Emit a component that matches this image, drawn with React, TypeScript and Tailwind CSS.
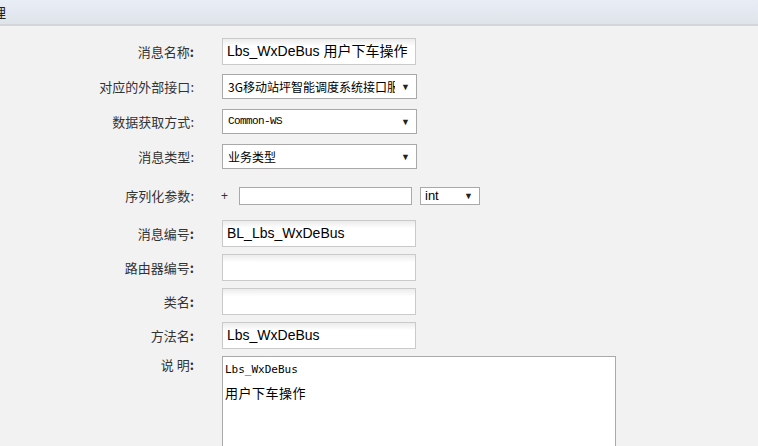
import React from "react";

const cjk = "font-['Microsoft_YaHei','Noto_Sans_CJK_SC',sans-serif]";

const Label = ({ text, strong }: { text: string; strong?: boolean }) => (
  <div
    className={`w-[194px] shrink-0 text-right text-[13px] leading-[18px] text-[#333] ${cjk}`}
  >
    {text}
    <span className={strong ? "font-bold" : ""}>:</span>
  </div>
);

const TextInput = ({ value }: { value?: string }) => (
  <div className="ml-[28px] flex h-[27px] w-[194px] items-center overflow-hidden whitespace-nowrap border border-[#cacaca] bg-white bg-gradient-to-b from-[#ececec] via-white via-30% to-white pl-[4px] text-[14px] text-black font-['Liberation_Sans','Noto_Sans_CJK_SC',sans-serif]">
    {value}
  </div>
);

const Select = ({
  value,
  mono,
}: {
  value: string;
  mono?: boolean;
}) => (
  <div className="ml-[28px] flex h-[25px] w-[195px] items-center border border-[#a9a9a9] bg-white pl-[5px] pr-[6px]">
    <span
      className={
        mono
          ? "min-w-0 flex-1 text-[11px] tracking-[-0.6px] text-black font-['Liberation_Mono',monospace]"
          : `min-w-0 flex-1 overflow-hidden whitespace-nowrap text-[12px] text-black ${cjk}`
      }
    >
      {value}
    </span>
    <span className="ml-[6px] shrink-0 text-[9px] text-[#222]">▼</span>
  </div>
);

export default function App() {
  return (
    <div className="h-[446px] w-[758px] overflow-hidden bg-[#f2f2f2]">
      <div className="flex h-[26px] items-center overflow-hidden border-b-2 border-[#d3d5da] bg-gradient-to-b from-[#e9edf5] to-[#dfe3ea]">
        <span className={`-ml-[8px] text-[14px] text-[#222] ${cjk}`}>理</span>
      </div>

      <div className="flex flex-col pt-[12px]">
        <div className="flex items-center">
          <Label text="消息名称" strong />
          <TextInput value="Lbs_WxDeBus 用户下车操作" />
        </div>

        <div className="mt-[9px] flex items-center">
          <Label text="对应的外部接口" />
          <Select value="3G移动站坪智能调度系统接口服务" />
        </div>

        <div className="mt-[10px] flex items-center">
          <Label text="数据获取方式" />
          <Select value="Common-WS" mono />
        </div>

        <div className="mt-[10px] flex items-center">
          <Label text="消息类型" />
          <Select value="业务类型" />
        </div>

        <div className="mt-[18px] flex items-center">
          <Label text="序列化参数" />
          <span className="ml-[27px] w-[18px] text-[12px] leading-[18px] text-[#333] font-['Liberation_Sans',sans-serif]">
            +
          </span>
          <div className="h-[18px] w-[173px] border border-[#a9a9a9] bg-white" />
          <div className="ml-[8px] flex h-[18px] w-[60px] items-center justify-between border border-[#a9a9a9] bg-white pl-[4px] pr-[6px]">
            <span className="text-[13px] text-black font-['Liberation_Sans',sans-serif]">
              int
            </span>
            <span className="text-[9px] text-[#222]">▼</span>
          </div>
        </div>

        <div className="mt-[15px] flex items-center">
          <Label text="消息编号" strong />
          <TextInput value="BL_Lbs_WxDeBus" />
        </div>

        <div className="mt-[7px] flex items-center">
          <Label text="路由器编号" strong />
          <TextInput />
        </div>

        <div className="mt-[7px] flex items-center">
          <Label text="类名" strong />
          <TextInput />
        </div>

        <div className="mt-[7px] flex items-center">
          <Label text="方法名" strong />
          <TextInput value="Lbs_WxDeBus" />
        </div>

        <div className="mt-[7px] flex items-start">
          <Label text="说 明" strong />
          <div className="ml-[28px] h-[120px] w-[394px] border border-[#a9a9a9] bg-white pl-[2px] pt-[1px] leading-[24px]">
            <div className="text-[11px] text-black font-['DejaVu_Sans_Mono',monospace]">
              Lbs_WxDeBus
            </div>
            <div className="-mt-[1px] text-[13px] tracking-[0.5px] text-black font-['Noto_Sans_CJK_SC',sans-serif]">
              用户下车操作
            </div>
          </div>
        </div>
      </div>
    </div>
  );
}
